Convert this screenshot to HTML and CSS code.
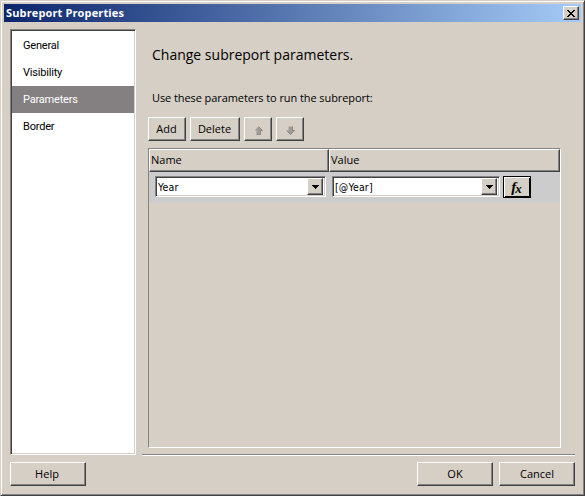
FILE: index.html
```html
<!DOCTYPE html>
<html lang="en">
<head>
<meta charset="utf-8">
<title>Subreport Properties</title>
<link rel="stylesheet" href="styles.css">
</head>
<body>
<div class="window">
  <header class="titlebar">
    <h1><span>Subreport Properties</span></h1>
    <button class="close" aria-label="Close"><svg width="8" height="7" viewBox="0 0 8 7" shape-rendering="crispEdges"><path d="M0 0h2v1h1v1h2V1h1V0h2v1H7v1H6v1H5v1h1v1h1v1h1v1H6V6H5V5H3v1H2v1H0V6h1V5h1V4h1V3H2V2H1V1H0z"/></svg></button>
  </header>
  <div class="body">
    <nav class="sidebar">
      <a><span>General</span></a>
      <a><span>Visibility</span></a>
      <a class="active"><span>Parameters</span></a>
      <a><span>Border</span></a>
    </nav>
    <main class="page">
      <h2><span>Change subreport parameters.</span></h2>
      <p><span>Use these parameters to run the subreport:</span></p>
      <div class="toolbar">
        <button class="btn add"><span>Add</span></button>
        <button class="btn delete"><span>Delete</span></button>
        <button class="btn move"><svg width="9" height="9" viewBox="0 0 9 9"><path d="M4.500 .5 8.500 4.500H6.500v4h-4v-4H.5z" fill="#a09c98"/><path d="M4.500 .5l4 4h-2v4h-4" fill="none" stroke="#8c8985"/></svg></button>
        <button class="btn move"><svg width="9" height="9" viewBox="0 0 9 9"><path d="M2.500 .5h4v4h2l-4 4-4-4h2z" fill="#a09c98"/><path d="M6.500 .5v4h2l-4 4-4-4" fill="none" stroke="#8c8985"/></svg></button>
      </div>
      <section class="grid">
        <div class="head"><div class="name"><span>Name</span></div><div class="value"><span>Value</span></div></div>
        <div class="row">
          <div class="combo first"><span>Year</span><button><svg width="7" height="4" viewBox="0 0 7 4" shape-rendering="crispEdges"><path d="M0 0h7v1H6v1H5v1H4v1H3V3H2V2H1V1H0z"/></svg></button></div>
          <div class="combo second"><span>[@Year]</span><button><svg width="7" height="4" viewBox="0 0 7 4" shape-rendering="crispEdges"><path d="M0 0h7v1H6v1H5v1H4v1H3V3H2V2H1V1H0z"/></svg></button></div>
          <button class="fx"><i>f</i><i class="sub">x</i></button>
        </div>
      </section>
    </main>
  </div>
  <footer class="footer">
    <button class="btn wide help"><span>Help</span></button>
    <button class="btn wide"><span>OK</span></button>
    <button class="btn wide"><span>Cancel</span></button>
  </footer>
</div>
</body>
</html>
```
FILE: styles.css
```css
* { box-sizing: border-box; }
body { margin: 0; font: 11px/14px "Open Sans", sans-serif; color: #000; }
button { font: inherit; color: inherit; padding: 0; margin: 0; }
span { white-space: nowrap; }
svg { display: block; }
.window {
  width: 585px; height: 496px; padding: 2px 3px 4px 2px;
  background: #d6cfc6; border: 1px solid #d6cfc6;
  border-right-color: #424142; border-bottom-color: #424142;
  box-shadow: inset 1px 1px #fff, inset -1px -1px #848284;
  display: flex; flex-direction: column;
}
.titlebar {
  height: 18px; margin: 1px 0 0 1px; padding-right: 2px; flex: none;
  background: linear-gradient(90deg, #0c266c, #a5cbf7);
  display: flex; align-items: center; justify-content: space-between;
}
h1 { margin: 0 0 0 2px; font-size: 11px; line-height: 18px; color: #fff; font-weight: 700; letter-spacing: .13px; }
.close {
  width: 16px; height: 14px; background: #d6cfc6; border: 1px solid;
  border-color: #fff #424142 #424142 #fff; box-shadow: inset -1px -1px #848284;
  display: flex; align-items: center; justify-content: center;
}
.body { display: flex; height: 426px; margin: 7px 0 0 7px; flex: none; }
.sidebar {
  width: 126px; background: #fff; border: 1px solid; border-color: #848284 #fff #fff #848284;
  box-shadow: inset 1px 1px #424142, inset -1px -1px #d6cfc6; padding: 2px 1px;
}
.sidebar a { display: flex; align-items: center; height: 27px; padding-left: 11px; font-family: Roboto, sans-serif; letter-spacing: -.2px; }
.sidebar .active { background: #848082; color: #fff; }
.page {
  width: 433px; margin-left: 6px; padding-left: 6px;
  border-bottom: 1px solid #848284; box-shadow: 0 1px #fff;
}
h2 { margin: 15px 0 0 4px; font-size: 14px; line-height: 22px; font-weight: 400; }
p { margin: 25px 0 0 4px; line-height: 14px; letter-spacing: -.08px; }
.toolbar { display: flex; gap: 4px; margin-top: 12px; }
.btn {
  height: 24px; background: #d6cfc6; border: 1px solid; border-color: #fff #424142 #424142 #fff;
  box-shadow: inset -1px -1px #848284; display: flex; align-items: center; justify-content: center;
}
.add { width: 38px; padding-right: 1px; }
.delete { width: 50px; padding-right: 1px; }
.move { width: 28px; padding-top: 3px; }
.grid {
  width: 413px; height: 300px; margin-top: 7px; border: 1px solid;
  border-color: #848284 #fff #fff #848284;
}
.head { display: flex; height: 23px; }
.head div {
  border: 1px solid; border-color: #fff #424142 #424142 #fff; box-shadow: inset -1px -1px #848284;
  padding: 3px 1px; line-height: 14px;
}
.name { width: 180px; }
.value { flex: 1; }
.row { display: flex; height: 31px; background: #ccc; padding: 4px 0 0 6px; }
.combo {
  height: 21px; background: #fff; border: 1px solid; border-color: #848284 #fff #fff #848284;
  box-shadow: inset 1px 1px #424142, inset -1px -1px #d6cfc6;
  display: flex; justify-content: space-between; align-items: center; padding: 1px 1px 1px 2px;
  font-family: "DejaVu Sans Condensed", sans-serif; font-size: 10.5px;
}
.combo span { letter-spacing: .15px; }
.first { width: 171px; }
.second { width: 168px; margin-left: 6px; }
.combo button {
  width: 16px; height: 17px; background: #d6cfc6; border: 1px solid;
  border-color: #fff #424142 #424142 #fff; box-shadow: inset -1px -1px #848284;
  display: flex; align-items: center; justify-content: center;
}
.first { padding-right: 2px; }
.second { padding-right: 2px; }
.fx {
  width: 28px; height: 22px; margin-left: 3px; background: #d6cfc6; border: 1px solid #000;
  box-shadow: inset 1px 1px #fff, inset -1px -1px #000;
  font: bold 15px/18px "Liberation Serif", serif;
}
.fx .sub { font-size: 13px; position: relative; top: 1px; left: -1px; }
.footer { display: flex; gap: 6px; margin: 7px 0 0 7px; width: 565px; }
.wide { width: 76px; }
.help { padding-right: 2px; margin-right: auto; }
```
